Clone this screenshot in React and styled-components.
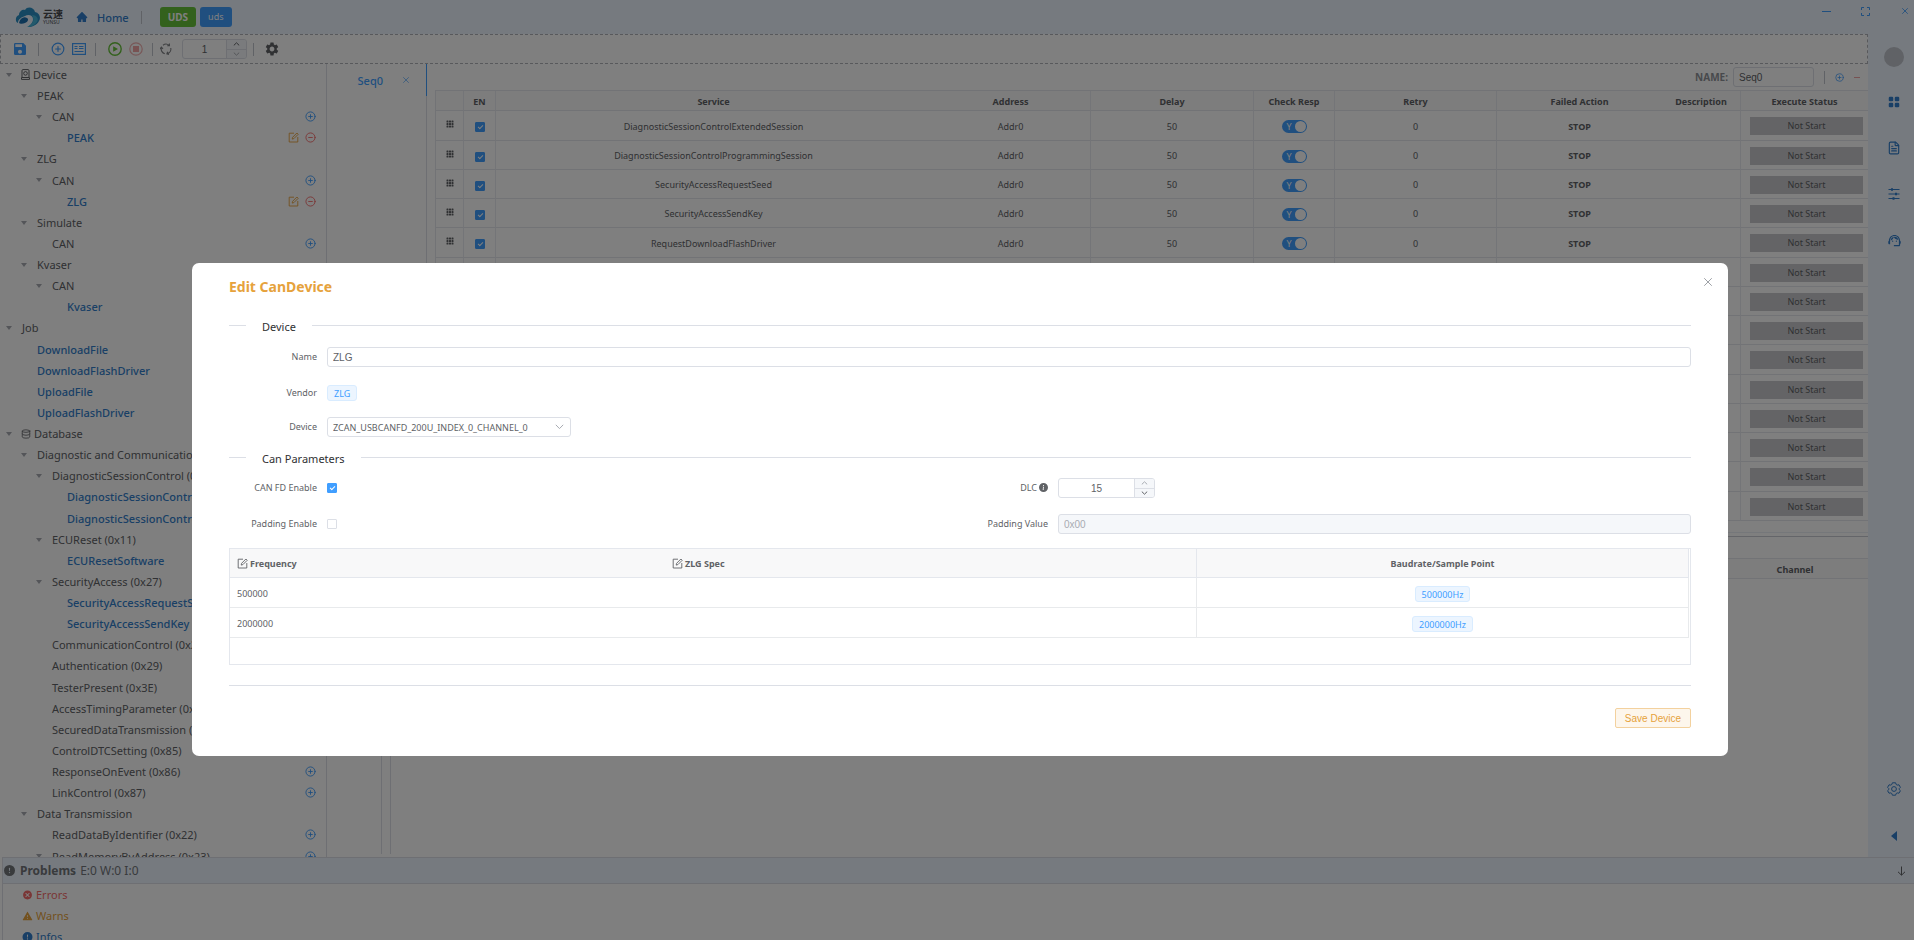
import React from 'react';
import styled, { createGlobalStyle, css } from 'styled-components';
import { CirclePlus, CircleMinus, Database, FileText, X } from 'lucide-react';
import { AiFillHome, AiFillWarning } from 'react-icons/ai';
import { BsExclamationCircleFill, BsFillGridFill, BsFillGrid3X3GapFill, BsInfoCircleFill } from 'react-icons/bs';
import { IoMdCloseCircle } from 'react-icons/io';
import { MdSave, MdSettings, MdSupportAgent } from 'react-icons/md';

const treeRows = [
  { level: 0, label: 'Device', open: true, icon: 'device' },
  { level: 1, label: 'PEAK', open: true },
  { level: 2, label: 'CAN', open: true, add: true },
  { level: 3, label: 'PEAK', leaf: true, edit: true },
  { level: 1, label: 'ZLG', open: true },
  { level: 2, label: 'CAN', open: true, add: true },
  { level: 3, label: 'ZLG', leaf: true, edit: true },
  { level: 1, label: 'Simulate', open: true },
  { level: 2, label: 'CAN', add: true },
  { level: 1, label: 'Kvaser', open: true },
  { level: 2, label: 'CAN', open: true, add: true },
  { level: 3, label: 'Kvaser', leaf: true, edit: true },
  { level: 0, label: 'Job', open: true },
  { level: 1, label: 'DownloadFile', leaf: true },
  { level: 1, label: 'DownloadFlashDriver', leaf: true },
  { level: 1, label: 'UploadFile', leaf: true },
  { level: 1, label: 'UploadFlashDriver', leaf: true },
  { level: 0, label: 'Database', open: true, icon: 'database' },
  { level: 1, label: 'Diagnostic and Communication', open: true },
  { level: 2, label: 'DiagnosticSessionControl (0x10)', open: true, add: true },
  { level: 3, label: 'DiagnosticSessionControl', leaf: true, edit: true },
  { level: 3, label: 'DiagnosticSessionControl', leaf: true, edit: true },
  { level: 2, label: 'ECUReset (0x11)', open: true, add: true },
  { level: 3, label: 'ECUResetSoftware', leaf: true, edit: true },
  { level: 2, label: 'SecurityAccess (0x27)', open: true, add: true },
  { level: 3, label: 'SecurityAccessRequestSeed', leaf: true, edit: true },
  { level: 3, label: 'SecurityAccessSendKey', leaf: true, edit: true },
  { level: 2, label: 'CommunicationControl (0x28)', add: true },
  { level: 2, label: 'Authentication (0x29)', add: true },
  { level: 2, label: 'TesterPresent (0x3E)', add: true },
  { level: 2, label: 'AccessTimingParameter (0x83)', add: true },
  { level: 2, label: 'SecuredDataTransmission (0x84)', add: true },
  { level: 2, label: 'ControlDTCSetting (0x85)', add: true },
  { level: 2, label: 'ResponseOnEvent (0x86)', add: true },
  { level: 2, label: 'LinkControl (0x87)', add: true },
  { level: 1, label: 'Data Transmission', open: true },
  { level: 2, label: 'ReadDataByIdentifier (0x22)', add: true },
  { level: 2, label: 'ReadMemoryByAddress (0x23)', open: true, add: true },
];

const services = [
  'DiagnosticSessionControlExtendedSession',
  'DiagnosticSessionControlProgrammingSession',
  'SecurityAccessRequestSeed',
  'SecurityAccessSendKey',
  'RequestDownloadFlashDriver',
  ...Array(9).fill(''),
];

const baudrates = [
  { freq: '500000', tag: '500000Hz' },
  { freq: '2000000', tag: '2000000Hz' },
];

function Logo() {
  return (
    <LogoBox>
      <svg width="26" height="21" viewBox="0 0 26 21">
        <path
          d="M3 16C0 15 0 9 4 8C4 4 8 2 10 3C12-1 19 0 20 5C25 6 26 11 24 14C22 18 17 20 13 20C15 18 18 16 18 12C18 8 13 7 10 9C7 10 3 12 3 16Z"
          fill="#2a8fc4"
        />
        <path d="M4 16C5 11 9 9 12 11C14 12 13 15 10 16C8 17 5 17 4 16Z" fill="#1b6fae" />
        <path d="M12 20C18 17 20 13 17 8C22 8 24 12 22 15C20 18 16 20 12 20Z" fill="#46b5d8" />
      </svg>
      <LogoWords>
        <LogoName>云速</LogoName>
        <LogoSub>YUNSU</LogoSub>
      </LogoWords>
    </LogoBox>
  );
}

function NewsIcon() {
  return (
    <svg width="14" height="12" viewBox="0 0 14 12" fill="none" stroke="#409eff">
      <rect x="0.6" y="0.6" width="12.8" height="10.8" strokeWidth="1.2" />
      <path d="M2.5 3.5h3M2.5 5.5h3M7 3.5h4.5M7 5.5h4.5M2.5 8.5h9" strokeWidth="1.2" />
    </svg>
  );
}

function PlayIcon() {
  return (
    <svg width="14" height="14" viewBox="0 0 14 14">
      <circle cx="7" cy="7" r="6.2" fill="none" stroke="#67c23a" strokeWidth="1.4" />
      <path d="M5.2 4.2L10 7L5.2 9.8Z" fill="#67c23a" />
    </svg>
  );
}

function StopIcon() {
  return (
    <svg width="14" height="14" viewBox="0 0 14 14">
      <circle cx="7" cy="7" r="6.2" fill="none" stroke="#f0b0b0" strokeWidth="1.2" />
      <rect x="4" y="4" width="6" height="6" fill="#f0a5a5" />
    </svg>
  );
}

function CycleIcon() {
  return (
    <svg width="12" height="12" viewBox="0 0 12 12" fill="none" stroke="#808286" strokeWidth="1.1">
      <path d="M3 2.2A4.8 4.8 0 0 1 9.2 2.4M9.4 0.6V2.8H7.2" />
      <path d="M10.8 5A4.8 4.8 0 0 1 7.4 10.6M9 11.4L6.9 10.8L7.6 8.8" />
      <path d="M4.8 10.7A4.8 4.8 0 0 1 1.4 4.6M0 6L1.4 4.2L3 5.8" />
    </svg>
  );
}

function EditIcon() {
  return (
    <svg width="11" height="11" viewBox="0 0 11 11" fill="none" stroke="currentColor" strokeWidth="0.9">
      <path d="M6 1.2H1.2V10H9.8V5" />
      <path d="M4.2 7.1L4.6 5.3L8.9 1L10.2 2.3L5.9 6.6Z" />
    </svg>
  );
}

function DeviceIcon() {
  return (
    <svg width="9" height="11" viewBox="0 0 9 11" fill="none" stroke="#606266">
      <path d="M1 8V1.6Q1 0.6 2 0.6H7Q8 0.6 8 1.6V8" />
      <path d="M0.5 8.5H8.5V10.4H0.5Z" />
      <circle cx="4.5" cy="4.4" r="1.8" />
    </svg>
  );
}

function SlidersIcon() {
  return (
    <svg width="12" height="12" viewBox="0 0 12 12" fill="none" stroke="#337ecc" strokeWidth="1.1">
      <path d="M0.5 1.5H11.5M0.5 6H11.5M0.5 10.5H11.5" />
      <path d="M4 0.2V2.8M8 4.7V7.3M5.5 9.2V11.8" strokeWidth="2" />
    </svg>
  );
}

// gear outline with six soft lobes
function PreferencesIcon() {
  return (
    <svg width="14" height="14" viewBox="0 0 14 14" fill="none" stroke="#337ecc" strokeLinejoin="round">
      <path d="M5.4 0.8H8.6L9.2 2.5L10.2 3.1L12 2.8L13.4 5.4L12.2 6.6V7.6L13.4 8.7L12 11.2L10.2 10.9L9.2 11.5L8.6 13.2H5.4L4.8 11.5L3.8 10.9L2 11.2L0.6 8.7L1.8 7.6V6.6L0.6 5.4L2 2.8L3.8 3.1L4.8 2.5Z" />
      <circle cx="7" cy="7" r="2.4" />
    </svg>
  );
}

function Chevron({ up, color = '#909399' }) {
  return (
    <svg width="7" height="4" viewBox="0 0 7 4" fill="none" stroke={color}>
      <path d={up ? 'M0.8 3.4L3.5 0.8L6.2 3.4' : 'M0.8 0.6L3.5 3.2L6.2 0.6'} />
    </svg>
  );
}

function NumberInput({ value, label, small, id }) {
  return (
    <NumberBox $small={small}>
      <NumberField id={id} aria-label={label} defaultValue={value} />
      <Steppers>
        <StepButton aria-label="Increase">
          <Chevron up color={small ? '#606266' : '#a8abb2'} />
        </StepButton>
        <StepButton aria-label="Decrease">
          <Chevron color={small ? '#a8abb2' : '#606266'} />
        </StepButton>
      </Steppers>
    </NumberBox>
  );
}

function Tree() {
  return (
    <TreeList>
      {treeRows.map((row, i) => (
        <TreeRow key={i} $level={row.level}>
          <Caret>{row.open && <CaretMark />}</Caret>
          {row.icon === 'device' && <DeviceIcon />}
          {row.icon === 'database' && <Database size={10} color="#606266" />}
          <TreeLabel $leaf={row.leaf}>{row.label}</TreeLabel>
          {row.edit && (
            <>
              <EditButton aria-label="Edit">
                <EditIcon />
              </EditButton>
              <IconButton aria-label="Remove">
                <CircleMinus size={11} color="#f56c6c" />
              </IconButton>
            </>
          )}
          {row.add && (
            <IconButton aria-label="Add">
              <CirclePlus size={11} color="#409eff" />
            </IconButton>
          )}
        </TreeRow>
      ))}
    </TreeList>
  );
}

function ServiceTable() {
  return (
    <SeqTable>
      <colgroup>
        <col style={{ width: 28 }} />
        <col style={{ width: 32 }} />
        <col />
        <col style={{ width: 160 }} />
        <col style={{ width: 163 }} />
        <col style={{ width: 81 }} />
        <col style={{ width: 162 }} />
        <col style={{ width: 165 }} />
        <col style={{ width: 79 }} />
        <col style={{ width: 127 }} />
      </colgroup>
      <thead>
        <tr>
          <SeqHead $line />
          <SeqHead $line>EN</SeqHead>
          <SeqHead>Service</SeqHead>
          <SeqHead $line>Address</SeqHead>
          <SeqHead $line>Delay</SeqHead>
          <SeqHead $line>Check Resp</SeqHead>
          <SeqHead $line>Retry</SeqHead>
          <SeqHead>Failed Action</SeqHead>
          <SeqHead $line>Description</SeqHead>
          <SeqHead>Execute Status</SeqHead>
        </tr>
      </thead>
      <tbody>
        {services.map((name, i) => (
          <SeqRow key={i}>
            <SeqCell $line>
              <DragHandle>
                <BsFillGrid3X3GapFill size={8} />
              </DragHandle>
            </SeqCell>
            <SeqCell $line>
              <Checkbox type="checkbox" defaultChecked aria-label="Enable service" />
            </SeqCell>
            <SeqCell>{name}</SeqCell>
            <SeqCell $line>Addr0</SeqCell>
            <SeqCell $line>50</SeqCell>
            <SeqCell $line>
              <Switch>
                <SwitchInput type="checkbox" role="switch" defaultChecked />
                Y
                <SwitchKnob />
              </Switch>
            </SeqCell>
            <SeqCell $line>0</SeqCell>
            <SeqCell $bold>STOP</SeqCell>
            <SeqCell $line />
            <SeqCell>
              <Status>Not Start</Status>
            </SeqCell>
          </SeqRow>
        ))}
      </tbody>
    </SeqTable>
  );
}

function DeviceDialog() {
  return (
    <Overlay>
      <Dialog role="dialog" aria-label="Edit CanDevice">
        <DialogHeader>
          <DialogTitle>Edit CanDevice</DialogTitle>
          <IconButton aria-label="Close">
            <X size={14} strokeWidth={1.5} color="#909399" />
          </IconButton>
        </DialogHeader>

        <Divider>
          <span>Device</span>
        </Divider>
        <Field $height={46}>
          <FieldLabel htmlFor="name">Name</FieldLabel>
          <TextInput id="name" defaultValue="ZLG" />
        </Field>
        <Field $height={26}>
          <FieldLabel as="span">Vendor</FieldLabel>
          <Tag>ZLG</Tag>
        </Field>
        <Field $height={42}>
          <FieldLabel htmlFor="device">Device</FieldLabel>
          <SelectBox>
            <Select id="device">
              <option>ZCAN_USBCANFD_200U_INDEX_0_CHANNEL_0</option>
            </Select>
            <SelectArrow>
              <svg width="9" height="6" viewBox="0 0 9 6" fill="none" stroke="#a8abb2">
                <path d="M0.8 0.8L4.5 4.6L8.2 0.8" />
              </svg>
            </SelectArrow>
          </SelectBox>
        </Field>

        <Divider>
          <span>Can Parameters</span>
        </Divider>
        <FieldGrid>
          <Field $height={32}>
            <FieldLabel htmlFor="canfd">CAN FD Enable</FieldLabel>
            <Checkbox id="canfd" type="checkbox" defaultChecked />
          </Field>
          <Field $height={32}>
            <FieldLabel htmlFor="dlc">
              DLC
              <BsInfoCircleFill size={9} />
            </FieldLabel>
            <NumberInput id="dlc" value="15" label="DLC" />
          </Field>
          <Field $height={40}>
            <FieldLabel htmlFor="padding">Padding Enable</FieldLabel>
            <Checkbox id="padding" type="checkbox" />
          </Field>
          <Field $height={40}>
            <FieldLabel htmlFor="padvalue">Padding Value</FieldLabel>
            <TextInput id="padvalue" defaultValue="0x00" disabled />
          </Field>
        </FieldGrid>

        <BaudBox>
          <BaudTable>
            <colgroup>
              <col style={{ width: 435 }} />
              <col />
              <col style={{ width: 492 }} />
            </colgroup>
            <thead>
              <tr>
                <BaudHead>
                  <EditIcon />
                  Frequency
                </BaudHead>
                <BaudHead $line>
                  <EditIcon />
                  ZLG Spec
                </BaudHead>
                <BaudHead $line $center>
                  Baudrate/Sample Point
                </BaudHead>
              </tr>
            </thead>
            <tbody>
              {baudrates.map((row) => (
                <tr key={row.freq}>
                  <BaudCell>{row.freq}</BaudCell>
                  <BaudCell $line />
                  <BaudCell $line $center>
                    <Tag>{row.tag}</Tag>
                  </BaudCell>
                </tr>
              ))}
            </tbody>
          </BaudTable>
        </BaudBox>

        <DialogFooter>
          <SaveButton>Save Device</SaveButton>
        </DialogFooter>
      </Dialog>
    </Overlay>
  );
}

export default function App() {
  return (
    <Page>
      <GlobalStyle />
      <Header>
        <Logo />
        <HomeLink href="#home">
          <AiFillHome size={12} />
          Home
        </HomeLink>
        <Separator />
        <HeaderTags>
          <HeaderTag $color="#67c23a" $bold>
            UDS
          </HeaderTag>
          <HeaderTag $color="#409eff">uds</HeaderTag>
        </HeaderTags>
        <WindowControls>
          <IconButton aria-label="Minimize">
            <svg width="9" height="9" viewBox="0 0 9 9" stroke="#409eff">
              <path d="M0 4.5H9" />
            </svg>
          </IconButton>
          <IconButton aria-label="Full screen">
            <svg width="9" height="9" viewBox="0 0 9 9" fill="none" stroke="#409eff">
              <path d="M0.5 3V0.5H3M6 0.5H8.5V3M8.5 6V8.5H6M3 8.5H0.5V6" />
            </svg>
          </IconButton>
          <IconButton aria-label="Close window">
            <X size={10} color="#409eff" />
          </IconButton>
        </WindowControls>
      </Header>

      <Workspace>
        <Center>
          <Toolbar>
            <IconButton aria-label="Save">
              <MdSave size={16} color="#409eff" />
            </IconButton>
            <ToolGap />
            <Separator />
            <ToolGroup>
              <IconButton aria-label="Add">
                <CirclePlus size={14} color="#409eff" />
              </IconButton>
              <IconButton aria-label="List">
                <NewsIcon />
              </IconButton>
            </ToolGroup>
            <Separator />
            <ToolGroup>
              <IconButton aria-label="Run">
                <PlayIcon />
              </IconButton>
              <IconButton aria-label="Stop">
                <StopIcon />
              </IconButton>
            </ToolGroup>
            <Separator />
            <CycleGroup>
              <CycleIcon />
              <NumberInput value="1" label="Cycles" small />
            </CycleGroup>
            <Separator />
            <ToolGap />
            <IconButton aria-label="Settings">
              <MdSettings size={16} color="#606266" />
            </IconButton>
          </Toolbar>
          <Body>
            <Tree />
            <Panes>
              <UpperPane>
                <SeqTabs>
                  <SeqTab>
                    Seq0
                    <X size={10} strokeWidth={1.5} />
                  </SeqTab>
                </SeqTabs>
                <SeqContent>
                  <NameBar>
                    <label htmlFor="seqname">NAME:</label>
                    <NameInput id="seqname" defaultValue="Seq0" />
                    <Separator />
                    <IconButton aria-label="Add service">
                      <CirclePlus size={9} color="#409eff" />
                    </IconButton>
                    <IconButton aria-label="Remove service">
                      <svg width="6" height="9" viewBox="0 0 6 9" stroke="#f0a5a5">
                        <path d="M0 4.5H6" />
                      </svg>
                    </IconButton>
                  </NameBar>
                  <SeqTableBox>
                    <ServiceTable />
                  </SeqTableBox>
                </SeqContent>
              </UpperPane>
              <LowerPane>
                <LowerTabs />
                <LowerContent>
                  <ChannelTable>
                    <thead>
                      <tr>
                        <SeqHead />
                        <SeqHead>Channel</SeqHead>
                      </tr>
                    </thead>
                  </ChannelTable>
                </LowerContent>
              </LowerPane>
            </Panes>
          </Body>
        </Center>
        <SideBar>
          <Avatar />
          <IconButton aria-label="Apps">
            <BsFillGridFill size={12} />
          </IconButton>
          <IconButton aria-label="Document">
            <FileText size={14} />
          </IconButton>
          <IconButton aria-label="Options">
            <SlidersIcon />
          </IconButton>
          <IconButton aria-label="Support">
            <MdSupportAgent size={15} />
          </IconButton>
          <SideBottom>
            <IconButton aria-label="Preferences">
              <PreferencesIcon />
            </IconButton>
            <IconButton aria-label="Collapse">
              <svg width="6" height="10" viewBox="0 0 6 10">
                <path d="M6 0V10L0 5Z" fill="#337ecc" />
              </svg>
            </IconButton>
          </SideBottom>
        </SideBar>
      </Workspace>

      <Problems>
        <ProblemsHeader>
          <BsExclamationCircleFill size={11} />
          <b>Problems</b>
          <span>E:0 W:0 I:0</span>
          <IconButton aria-label="Hide problems">
            <svg width="9" height="10" viewBox="0 0 9 10" fill="none" stroke="#606266">
              <path d="M4.5 0.5V9M1 5.8L4.5 9.2L8 5.8" />
            </svg>
          </IconButton>
        </ProblemsHeader>
        <ProblemRow $color="#f56c6c">
          <IoMdCloseCircle size={12} />
          Errors
        </ProblemRow>
        <ProblemRow $color="#e6a23c">
          <AiFillWarning size={12} />
          Warns
        </ProblemRow>
        <ProblemRow $color="#337ecc">
          <BsExclamationCircleFill size={10} />
          Infos
        </ProblemRow>
      </Problems>

      <DeviceDialog />
    </Page>
  );
}

const GlobalStyle = createGlobalStyle`
  * {
    box-sizing: border-box;
  }
  body {
    margin: 0;
    color: #606266;
    font-family: 'Noto Sans', 'Noto Sans CJK SC', sans-serif;
    font-size: 9px;
  }
  button, input, select {
    margin: 0;
    font-family: 'Liberation Sans', Arial, sans-serif;
  }
  svg {
    flex: none;
  }
`;

const Page = styled.div`
  display: flex;
  flex-direction: column;
  height: 100vh;
  overflow: hidden;
  background: #ffffff;
`;

const Header = styled.header`
  display: flex;
  flex: none;
  align-items: center;
  height: 34px;
  padding: 0 4px 0 15px;
  background: #ecf5ff;
`;

const LogoBox = styled.div`
  display: flex;
  align-items: center;
  gap: 2px;
  width: 61px;
`;

const LogoWords = styled.div`
  display: flex;
  flex-direction: column;
  color: #4a4c50;
`;

const LogoName = styled.span`
  font-size: 10px;
  line-height: 10px;
  font-weight: 700;
`;

const LogoSub = styled.span`
  font-size: 5px;
  line-height: 6px;
`;

const HomeLink = styled.a`
  display: flex;
  align-items: center;
  gap: 9px;
  margin-right: 12px;
  color: #337ecc;
  font-size: 11px;
  font-weight: 500;
  text-decoration: none;
`;

const Separator = styled.span`
  flex: none;
  width: 1px;
  height: 13px;
  background: #c0c4cc;
`;

const HeaderTags = styled.div`
  display: flex;
  gap: 4px;
  margin-left: 18px;
`;

const HeaderTag = styled.span`
  height: 20px;
  padding: 0 8px;
  border-radius: 3px;
  background: ${({ $color }) => $color};
  color: #ffffff;
  font-size: ${({ $bold }) => ($bold ? 10 : 9)}px;
  font-weight: ${({ $bold }) => ($bold ? 700 : 400)};
  line-height: 20px;
`;

const WindowControls = styled.div`
  display: flex;
  align-items: center;
  gap: 30px;
  height: 22px;
  margin-left: auto;
  align-self: flex-start;
`;

const IconButton = styled.button`
  display: flex;
  flex: none;
  padding: 0;
  border: none;
  background: none;
  color: inherit;
  cursor: pointer;
`;

const EditButton = styled(IconButton)`
  color: #e6a23c;
`;

const Workspace = styled.div`
  display: flex;
  flex: 1;
  min-height: 0;
`;

const Center = styled.div`
  display: flex;
  flex: 1;
  flex-direction: column;
  min-width: 0;
`;

const Toolbar = styled.div`
  display: flex;
  flex: none;
  align-items: center;
  height: 30px;
  padding: 0 11px;
  border: 1px dashed #b1b3b8;
`;

const ToolGap = styled.span`
  width: 10px;
`;

const ToolGroup = styled.div`
  display: flex;
  align-items: center;
  gap: 7px;
  padding: 0 9px 0 12px;
`;

const CycleGroup = styled.div`
  display: flex;
  align-items: center;
  gap: 10px;
  padding: 0 6px 0 7px;
`;

const NumberBox = styled.div`
  display: flex;
  width: ${({ $small }) => ($small ? 65 : 97)}px;
  height: 20px;
  border: 1px solid #dcdfe6;
  border-radius: 3px;
  overflow: hidden;
`;

const NumberField = styled.input`
  flex: 1;
  min-width: 0;
  padding: 0;
  border: none;
  background: none;
  color: #606266;
  font-size: 10px;
  text-align: center;
`;

const Steppers = styled.div`
  display: flex;
  flex-direction: column;
  width: 20px;
  border-left: 1px solid #dcdfe6;
  background: #f5f7fa;
`;

const StepButton = styled.button`
  display: flex;
  flex: 1;
  align-items: center;
  justify-content: center;
  padding: 0;
  border: none;
  background: none;

  & + & {
    border-top: 1px solid #dcdfe6;
  }
`;

const Body = styled.div`
  display: flex;
  flex: 1;
  min-height: 0;
`;

const TreeList = styled.ul`
  display: grid;
  flex: none;
  grid-auto-rows: 21px 21px 21px 21px 21px 22px 21px 21px;
  width: 327px;
  margin: 0;
  padding: 0;
  border-right: 1px solid #dcdfe6;
  list-style: none;
  overflow: hidden;
`;

const TreeRow = styled.li`
  display: flex;
  align-items: center;
  gap: 6px;
  min-width: 0;
  padding: 0 10px 0 ${({ $level }) => 6 + $level * 15}px;

  > svg {
    margin: 0 -3px 0 -1px;
  }
`;

const Caret = styled.span`
  flex: none;
  width: 10px;
`;

const CaretMark = styled.span`
  display: block;
  width: 0;
  border: 3px solid transparent;
  border-top: 4px solid #a8abb2;
  border-bottom: none;
`;

const TreeLabel = styled.span`
  flex: 1;
  color: ${({ $leaf }) => ($leaf ? '#337ecc' : '#606266')};
  font-size: 11px;
  font-weight: ${({ $leaf }) => ($leaf ? 500 : 400)};
  white-space: nowrap;
`;

const Panes = styled.div`
  display: flex;
  flex: 1;
  flex-direction: column;
  min-width: 0;
`;

const UpperPane = styled.section`
  display: flex;
  flex: none;
`;

const SeqTabs = styled.nav`
  flex: none;
  width: 100px;
  box-shadow: inset -1px 0 #dcdfe6;
`;

const SeqTab = styled.button`
  display: flex;
  align-items: center;
  justify-content: flex-end;
  gap: 18px;
  width: 100%;
  height: 32px;
  padding: 0 15px 0 0;
  border: none;
  border-right: 1px solid #409eff;
  background: none;
  color: #409eff;
  font-family: inherit;
  font-size: 11px;
  font-weight: 500;
`;

const SeqContent = styled.div`
  flex: 1;
  min-width: 0;
  padding: 0 0 3px 8px;
`;

const NameBar = styled.div`
  display: flex;
  align-items: center;
  justify-content: flex-end;
  gap: 10px;
  height: 26px;
  padding-right: 8px;
  color: #909399;
  font-size: 10px;
  font-weight: 700;

  label {
    margin-right: -5px;
  }
`;

const inputStyle = css`
  height: 20px;
  padding: 0 5px;
  border: 1px solid #dcdfe6;
  border-radius: 3px;
  background: #ffffff;
  color: #606266;
  font-size: 10px;
`;

const NameInput = styled.input`
  ${inputStyle}
  width: 81px;
`;

const SeqTableBox = styled.div`
  height: 443px;
  border-bottom: 1px solid #ebeef5;
`;

const SeqTable = styled.table`
  width: 100%;
  border-left: 1px solid #e4e7ed;
  border-top: 1px solid #e4e7ed;
  border-spacing: 0;
  table-layout: fixed;
`;

const cellLine = css`
  border-right: ${({ $line }) => ($line ? '1px solid #e8eaf0' : 'none')};
  border-bottom: 1px solid #e4e7ed;
`;

const SeqHead = styled.th`
  ${cellLine}
  height: 20px;
  padding: 1px 0 0;
  background: #fafafa;
  color: #606266;
  font-weight: 700;
  text-align: center;
`;

const SeqRow = styled.tr`
  height: 29px;

  &:nth-child(4n + 1) {
    height: 30px;
  }
`;

const SeqCell = styled.td`
  ${cellLine}
  padding: 1px 0 0;
  font-weight: ${({ $bold }) => ($bold ? 700 : 400)};
  text-align: center;
  vertical-align: middle;

  > input, > label {
    vertical-align: middle;
  }
`;

const DragHandle = styled.span`
  display: flex;
  justify-content: center;
  padding-bottom: 4px;
  cursor: move;
`;

const Checkbox = styled.input`
  position: relative;
  width: 10px;
  height: 10px;
  border: 1px solid #dcdfe6;
  border-radius: 1px;
  background: #ffffff;
  appearance: none;

  &:checked {
    border-color: #409eff;
    background: #409eff;
  }

  &:checked::after {
    content: '';
    position: absolute;
    left: 3px;
    top: 1px;
    width: 2px;
    height: 4px;
    border: solid #ffffff;
    border-width: 0 1px 1px 0;
    box-sizing: content-box;
    transform: rotate(45deg);
  }
`;

const Switch = styled.label`
  display: inline-flex;
  position: relative;
  align-items: center;
  justify-content: space-between;
  width: 25px;
  height: 13px;
  padding: 0 1px 0 5px;
  border-radius: 7px;
  background: #409eff;
  color: #ffffff;
`;

const SwitchInput = styled.input`
  position: absolute;
  inset: 0;
  opacity: 0;
`;

const SwitchKnob = styled.span`
  width: 11px;
  height: 11px;
  border-radius: 50%;
  background: #ffffff;
`;

const Status = styled.div`
  height: 18px;
  margin: 0 5px 0 9px;
  background: #c8c9cc;
  color: #606266;
  line-height: 18px;
`;

const LowerPane = styled.section`
  display: flex;
  flex: 1;
  min-height: 0;
  padding-bottom: 3px;
  border-top: 1px solid #c8cbd2;
`;

const LowerTabs = styled.nav`
  width: 55px;
  border-right: 1px solid #dcdfe6;
`;

const LowerContent = styled.div`
  flex: 1;
  margin-left: 8px;
  padding-top: 21px;
  border-left: 1px solid #dcdfe6;
`;

const ChannelTable = styled.table`
  width: 100%;
  border-top: 1px solid #e4e7ed;
  border-spacing: 0;
  table-layout: fixed;

  th:last-child {
    width: 146px;
  }
`;

const SideBar = styled.aside`
  display: flex;
  flex: none;
  flex-direction: column;
  align-items: center;
  gap: 33px;
  width: 46px;
  padding-top: 13px;
  padding-left: 6px;
  background: #ecf5ff;
  color: #337ecc;
`;

const Avatar = styled.div`
  width: 20px;
  height: 20px;
  margin-bottom: -4px;
  border-radius: 50%;
  background: #c0c4cc;
`;

const SideBottom = styled.div`
  display: flex;
  flex-direction: column;
  align-items: center;
  gap: 35px;
  margin-top: auto;
  padding-bottom: 16px;
`;

const Problems = styled.section`
  flex: none;
  height: 83px;
  margin-left: 2px;
  border: 1px solid #dcdfe6;
  border-right: none;
  border-bottom: none;
`;

const ProblemsHeader = styled.div`
  display: flex;
  align-items: center;
  height: 26px;
  padding: 0 8px 0 1px;
  border-bottom: 1px solid #dcdfe6;
  background: #ecf5ff;
  color: #73767a;
  font-size: 12px;

  b {
    margin: 0 4px 0 5px;
  }

  span {
    flex: 1;
  }
`;

const ProblemRow = styled.div`
  display: flex;
  align-items: center;
  gap: 3px;
  height: 21px;
  padding-left: 19px;
  color: ${({ $color }) => $color};
  font-size: 11px;

  svg {
    width: 11px;
  }
`;

const Overlay = styled.div`
  display: flex;
  position: fixed;
  inset: 0;
  align-items: flex-start;
  padding: 263px 186px 0 192px;
  background: rgba(0, 0, 0, 0.5);
`;

const Dialog = styled.section`
  flex: 1;
  min-width: 0;
  padding: 10px 37px 28px;
  border-radius: 7px;
  background: #ffffff;
`;

const DialogHeader = styled.header`
  display: flex;
  justify-content: space-between;
  height: 43px;

  button {
    height: 16px;
    margin-right: -24px;
    padding-top: 2px;
  }
`;

const DialogTitle = styled.h2`
  margin: 0;
  color: #e6a23c;
  font-size: 14px;
  line-height: 27px;
`;

const Divider = styled.div`
  display: flex;
  align-items: center;
  gap: 16px;
  height: 18px;
  color: #303133;
  font-size: 11px;

  span {
    padding-top: 2px;
  }

  &::before, &::after {
    content: '';
    width: 17px;
    height: 1px;
    background: #dcdfe6;
  }

  &::after {
    flex: 1;
  }
`;

const Field = styled.div`
  display: flex;
  align-items: center;
  gap: 10px;
  height: ${({ $height }) => $height}px;
`;

const FieldLabel = styled.label`
  display: flex;
  flex: none;
  align-items: center;
  justify-content: flex-end;
  gap: 2px;
  width: 88px;
  padding-bottom: 2px;
`;

const FieldGrid = styled.div`
  display: grid;
  grid-template-columns: 1fr 1fr;
  padding: 6px 0 4px;
`;

const TextInput = styled.input`
  ${inputStyle}
  flex: 1;
  min-width: 0;

  &:disabled {
    background: #f5f7fa;
    color: #a8abb2;
  }
`;

const Tag = styled.span`
  display: inline-block;
  height: 16px;
  padding: 0 6px;
  border: 1px solid #d9ecff;
  border-radius: 3px;
  background: #ecf5ff;
  color: #409eff;
  line-height: 15px;
`;

const SelectBox = styled.div`
  position: relative;
`;

const Select = styled.select`
  ${inputStyle}
  width: 244px;
  font-family: inherit;
  font-size: 9px;
  appearance: none;
`;

const SelectArrow = styled.span`
  display: flex;
  position: absolute;
  right: 7px;
  top: 7px;
  pointer-events: none;
`;

const BaudBox = styled.div`
  height: 117px;
  padding-right: 1px;
  border: 1px solid #e4e7ed;
`;

const BaudTable = styled.table`
  width: 100%;
  border-spacing: 0;
  table-layout: fixed;
`;

const BaudHead = styled.th`
  height: 29px;
  padding: 1px 7px 0;
  border-bottom: 1px solid #e4e7ed;
  border-right: ${({ $line }) => ($line ? '1px solid #e4e7ed' : 'none')};
  background: #f8f8f9;
  text-align: ${({ $center }) => ($center ? 'center' : 'left')};

  svg {
    margin-right: 2px;
    vertical-align: -2px;
  }
`;

const BaudCell = styled.td`
  height: 30px;
  padding: 2px 7px 0;
  border-bottom: 1px solid #e8eaec;
  border-right: ${({ $line }) => ($line ? '1px solid #e8eaec' : 'none')};
  text-align: ${({ $center }) => ($center ? 'center' : 'left')};
`;

const DialogFooter = styled.footer`
  display: flex;
  justify-content: flex-end;
  margin-top: 20px;
  padding-top: 22px;
  border-top: 1px solid #dcdfe6;
`;

const SaveButton = styled.button`
  height: 20px;
  padding: 0 9px;
  border: 1px solid #f3d19e;
  border-radius: 2px;
  background: #fdf6ec;
  color: #e6a23c;
  font-size: 10px;
`;
